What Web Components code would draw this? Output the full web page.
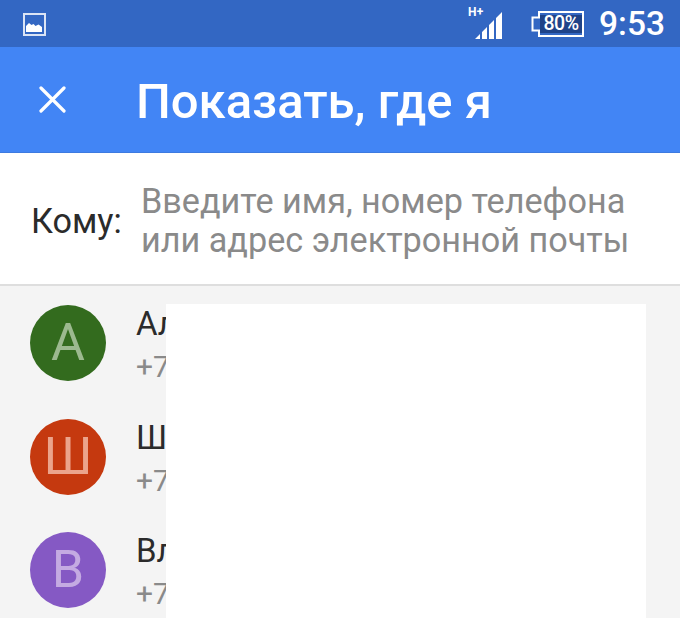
<!DOCTYPE html>
<html lang="ru"><head><meta charset="utf-8"><style>
html,body{margin:0;padding:0;background:#f4f4f4}
body{width:680px;height:618px;overflow:hidden;font-family:Roboto,"Noto Sans",sans-serif;position:relative}
</style></head><body>
<app-screen>
<status-bar></status-bar>
<app-header>Показать, где я</app-header>
<to-field label="Кому:"><span>Введите имя, номер телефона</span><span>или адрес электронной почты</span></to-field>
<contact-list>
<contact-row color="#336b1e" ink="#9cb98f" letter="А" name="Ал" phone="+7"></contact-row>
<contact-row color="#c5390f" ink="#eba48c" letter="Ш" name="Ш" phone="+7"></contact-row>
<contact-row color="#8559c4" ink="#c4aae2" letter="В" name="Вл" phone="+7"></contact-row>
</contact-list>
<white-mask></white-mask>
</app-screen>
<script>
function def(name,css,html){customElements.define(name,class extends HTMLElement{connectedCallback(){if(this.shadowRoot)return;const r=this.attachShadow({mode:'open'});r.innerHTML='<style>'+css+'</style>'+(typeof html==='function'?html(this):html);}});}
def('app-screen',':host{display:flex;flex-direction:column;width:680px;height:618px;position:relative;overflow:hidden}','<slot></slot>');
def('status-bar',`:host{display:flex;align-items:center;height:47px;background:#3367c3;color:#fff;box-sizing:border-box;padding:0 15px 0 23px}
.pic{margin-top:1px}.sp{flex:1}
.net{position:relative;width:38px;height:38px;margin-right:28px}
.h{position:absolute;left:3px;top:2px;font:700 12px/10px Roboto,sans-serif;letter-spacing:.3px}
.net svg{position:absolute;left:10px;top:5px}
.bat{margin-right:15px;position:relative;width:53px;height:26px}
.bat svg{position:absolute;left:0;top:0}
.bat b{position:absolute;left:9px;top:0;width:42px;height:26px;font:500 19.5px/26px Roboto,sans-serif;text-align:center;letter-spacing:-.5px}
.t{font:500 33.5px/47px Roboto,sans-serif}`,
`<svg class="pic" width="23" height="23" viewBox="0 0 23 23"><rect x="1" y="1" width="21" height="21" fill="none" stroke="#dbe4f5" stroke-width="2"/><path d="M3 19v-6l3-3 2.500 2 2-1 2 2 3-1.500 3.500 2.500v5z" fill="#fff"/></svg>
<span class="sp"></span>
<div class="net"><span class="h">H+</span><svg width="28" height="30" viewBox="0 0 28 30"><path d="M0 29l5-5v5zM7 29V22l5-5v12zM14 29V15l5-5v19zM21 29V8l6-6v27z" fill="#fff"/></svg></div>
<div class="bat"><svg width="53" height="26" viewBox="0 0 53 26"><path d="M8 1H52V25H8V19.500H1.500V6.500H8z" fill="none" stroke="#fff" stroke-width="2" stroke-linejoin="miter"/><rect x="9" y="4" width="42" height="18" fill="#1f4388"/></svg><b>80%</b></div>
<span class="t">9:53</span>`);
def('app-header',`:host{display:flex;align-items:center;height:106px;background:#4285f5;color:#fff;box-sizing:border-box;padding:0 0 0 39px;border-bottom:1px solid #3d7ae0}
svg{flex:none;margin-right:70px}
span{font:500 49px/1 Roboto,sans-serif;white-space:nowrap;margin-top:3px}`,
`<svg width="27" height="27" viewBox="0 0 27 27"><path d="M2 2L25 25M25 2L2 25" stroke="#fff" stroke-width="3.200" stroke-linecap="round"/></svg><span><slot></slot></span>`);
def('to-field',`:host{display:flex;align-items:center;height:133px;background:#fff;box-sizing:border-box;padding:5px 0 0 31px;border-bottom:2px solid #dedede}
.l{font:400 34.200px/1 Roboto,sans-serif;color:#2b2b2b;width:110px;flex:none}
.v{display:flex;flex-direction:column;font:400 34.200px/39.500px Roboto,sans-serif;color:#8a8a8a;white-space:nowrap}
::slotted(span){display:block}`,h=>`<span class="l">${h.getAttribute('label')}</span><div class="v"><slot></slot></div>`);
def('contact-list',':host{display:flex;flex-direction:column;flex:1;background:#f4f4f4;padding-top:19px;gap:37.500px}','<slot></slot>');
def('contact-row',`:host{display:flex;align-items:center;height:76px;padding-left:30px}
.a{width:76px;height:76px;border-radius:50%;display:flex;align-items:center;justify-content:center;font:400 52px/1 Roboto,sans-serif;flex:none;margin-right:30px}
.x{padding-top:5px}
.n{font:400 33px/42px Roboto,sans-serif;color:#2b2b2b}
.p{font:400 30px/43px Roboto,sans-serif;color:#8a8a8a}`,
h=>`<div class="a" style="background:${h.getAttribute('color')};color:${h.getAttribute('ink')}">${h.getAttribute('letter')}</div><div class="x"><div class="n">${h.getAttribute('name')}</div><div class="p">${h.getAttribute('phone')}</div></div>`);
def('white-mask',':host{position:absolute;left:166px;top:304px;width:480px;height:314px;background:#fff}','');
</script>
</body></html>
